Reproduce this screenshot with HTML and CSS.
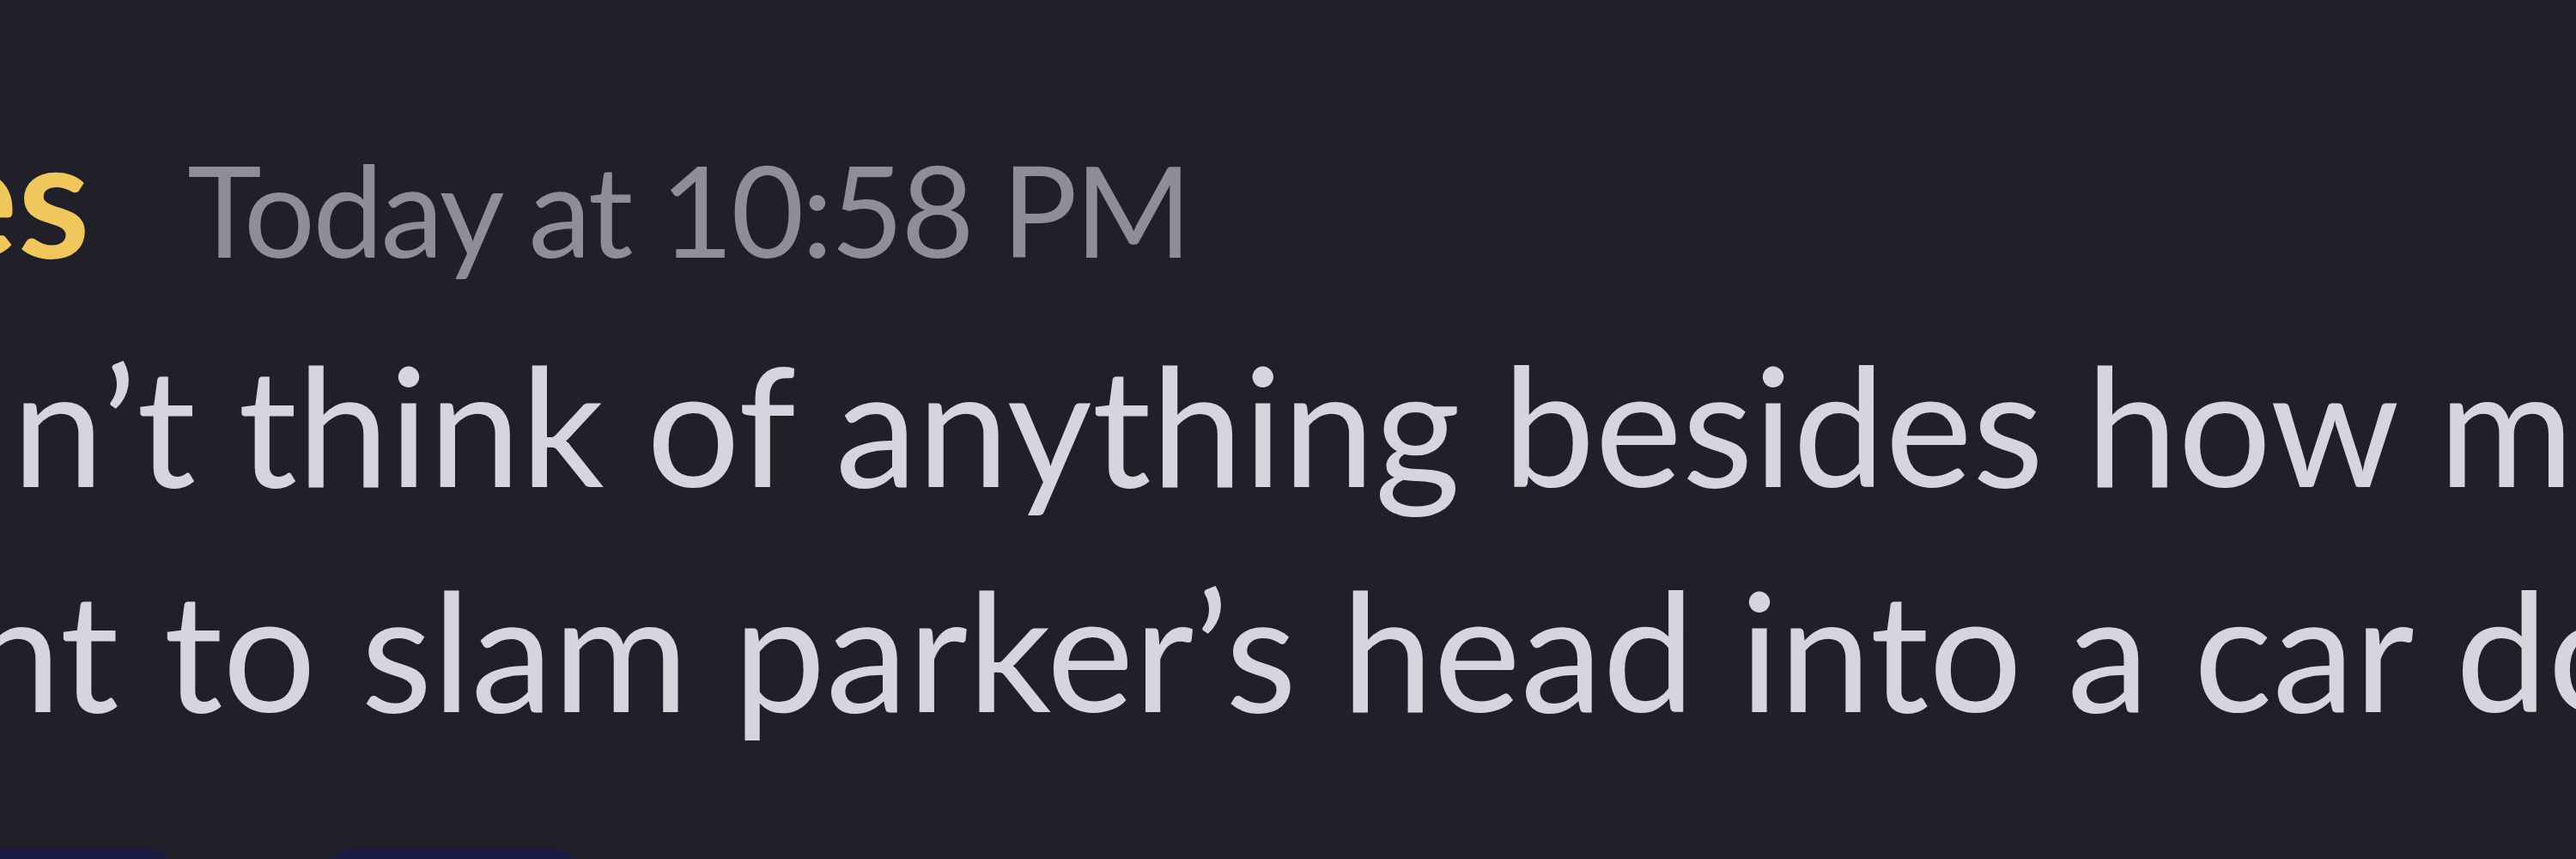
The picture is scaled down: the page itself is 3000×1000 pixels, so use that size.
FILE: index.html
```html
<!DOCTYPE html>
<html lang="en">
<head>
    <meta charset="UTF-8">
    <meta name="viewport" content="width=device-width, initial-scale=1.0">
    <title>Message</title>
    <link rel="stylesheet" href="styles.css">
</head>
<body>
    <div class="message">
        <!-- Header: author + time -->
        <div class="header">
            <span class="username">es</span>
            <span class="timestamp">Today at 10:58 PM</span>
        </div>

        <!-- Message body -->
        <div class="content">
            <div class="line">n’t think of anything besides how mu</div>
            <div class="line line-wrap">nt to slam parker’s head into a car do</div>
        </div>

        <!-- Reactions, cut off by the bottom edge -->
        <div class="reactions">
            <span class="reaction reaction-first"></span>
            <span class="reaction reaction-second"></span>
        </div>
    </div>
</body>
</html>
```

FILE: styles.css
```css
html, body {
    height: 100%;
}

body {
    margin: 0;
    background: #212028;
    font-family: 'Lato', 'Noto Sans', sans-serif;
    overflow: hidden;
}

.message {
    padding-top: 95px;
    width: 3000px;
    overflow: hidden;
}

.header {
    display: flex;
    align-items: baseline;
    height: 262px;
    line-height: 262px;
    white-space: nowrap;
}

.username {
    font-size: 192px;
    font-weight: 700;
    color: #f0c75c;
    margin-left: -82px;
}

.timestamp {
    font-size: 147px;
    line-height: 1;
    letter-spacing: -3px;
    color: #8d8e99;
    margin-left: 113px;
}

.content {
    font-size: 192px;
    line-height: 262px;
    color: #d5d5dd;
    white-space: nowrap;
    margin-top: 5px;
    margin-left: 14px;
}

.line-wrap {
    margin-left: -50px;
    word-spacing: 3px;
}

.reactions {
    display: flex;
    gap: 163px;
    margin-top: 102px;
}

.reaction {
    display: block;
    height: 120px;
    background: #191b42;
    border-radius: 40px;
}

.reaction-first {
    width: 300px;
    margin-left: -90px;
}

.reaction-second {
    width: 310px;
}
```
